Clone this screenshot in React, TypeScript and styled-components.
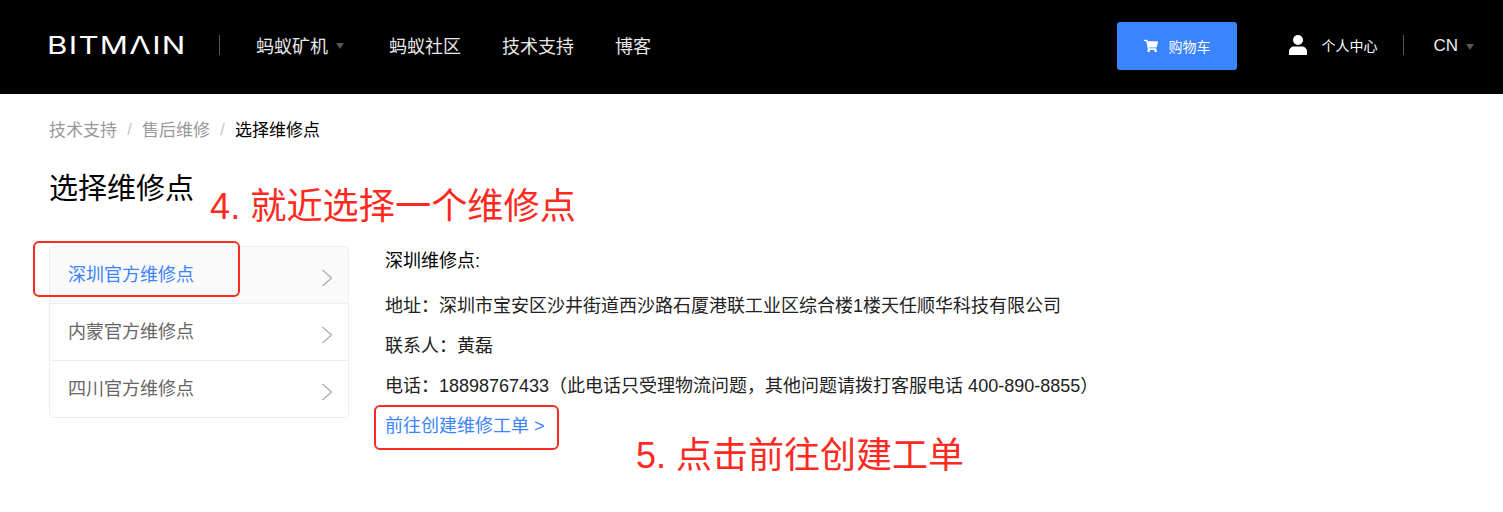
import * as React from "react";
import styled, { createGlobalStyle } from "styled-components";
import { FaShoppingCart } from "react-icons/fa";

const CJK = `"Liberation Sans", "Noto Sans CJK SC", sans-serif`;
const BLUE = "#3a84ff";
const RED = "#ff2a1f";

const GlobalStyle = createGlobalStyle`
	html, body {
		margin: 0;
		padding: 0;
		background: #fff;
		font-family: ${CJK};
	}
`;

const Page = styled.div`
	width: 1503px;
	height: 512px;
	overflow: hidden;
`;

const Header = styled.header`
	height: 94px;
	box-sizing: border-box;
	background: #000;
	display: flex;
	align-items: center;
	padding: 0 25px 2px 49px;
	color: #fff;
`;

const Logo = styled.div`
	font-family: "Inter", sans-serif;
	font-weight: 400;
	font-size: 24px;
	letter-spacing: 1px;
	width: 135px;
	margin-left: -2px;
	padding-bottom: 2px;
	white-space: nowrap;
	transform: scaleX(1.3);
	transform-origin: left center;
`;

const Divider = styled.span<{ $left: number }>`
	width: 1px;
	height: 20px;
	background: #555;
	margin-left: ${(p) => p.$left}px;
	margin-bottom: 2px;
`;

const Nav = styled.nav`
	display: flex;
	align-items: center;
	margin-left: 36px;
	gap: 41px;
	padding-bottom: 2px;
`;

const NavItem = styled.a`
	font-size: 18px;
	color: #e8e8e8;
	display: flex;
	align-items: center;
`;

const Caret = styled.i`
	width: 0;
	height: 0;
	margin: 2px 4px 0 8px;
	border-left: 4.5px solid transparent;
	border-right: 4.5px solid transparent;
	border-top: 6px solid #555;
`;

const HeaderRight = styled.div`
	margin-left: auto;
	display: flex;
	align-items: center;
`;

const CartButton = styled.button`
	width: 120px;
	height: 48px;
	border: 0;
	border-radius: 3px;
	background: ${BLUE};
	color: #fff;
	font-family: ${CJK};
	font-size: 14px;
	display: flex;
	align-items: center;
	justify-content: center;
	gap: 10px;
	padding: 0;
`;

const UserLink = styled.a`
	display: flex;
	align-items: center;
	margin-left: 52px;
	gap: 14px;
	font-size: 14px;
	padding-bottom: 2px;
`;

const Lang = styled.a`
	font-size: 17px;
	margin-left: 29px;
	display: flex;
	align-items: center;
	color: #eee;
`;

const Main = styled.main`
	position: relative;
	padding: 0 49px;
`;

const Breadcrumb = styled.div`
	display: flex;
	align-items: center;
	height: 20px;
	padding-top: 24px;
	font-size: 17px;
	color: #999;
`;

const Crumb = styled.span<{ $active?: boolean }>`
	color: ${(p) => (p.$active ? "#000" : "#999")};
`;

const Slash = styled.span`
	width: 25px;
	padding-top: 4px;
	text-align: center;
	font-size: 16px;
	color: #c4c4c4;
`;

const Title = styled.h1`
	margin: 31px 0 0;
	font-size: 29px;
	line-height: 40px;
	font-weight: 400;
	color: #000;
`;

const Body = styled.div`
	display: flex;
	align-items: flex-start;
	margin-top: 37px;
	gap: 36px;
`;

const List = styled.ul`
	width: 300px;
	box-sizing: border-box;
	margin: 0;
	padding: 0;
	list-style: none;
	border: 1px solid #eee;
	border-radius: 4px;
	overflow: hidden;
`;

const Row = styled.li<{ $active?: boolean }>`
	height: ${(p) => (p.$active ? 56 : 57)}px;
	box-sizing: border-box;
	padding: 0 15px 5px 18px;
	display: flex;
	align-items: center;
	justify-content: space-between;
	font-size: 18px;
	color: ${(p) => (p.$active ? BLUE : "#666")};
	background: ${(p) => (p.$active ? "#fafafa" : "#fff")};
	border-top: ${(p) => (p.$active ? "0" : "1px solid #eee")};
`;

const Chevron = styled.svg`
	width: 12px;
	height: 18px;
	margin-top: 11px;
	fill: none;
	stroke: #aaa;
	stroke-width: 1.2;
`;

const Detail = styled.div`
	font-size: 18px;
	color: #222;
`;

const DetailHead = styled.div`
	line-height: 30px;
	margin-bottom: 10px;
	color: #000;
`;

const Line = styled.div`
	line-height: 40px;
	white-space: nowrap;
`;

const CreateLink = styled.a`
	display: block;
	line-height: 40px;
	color: ${BLUE};
`;

const Annotation = styled.div<{ $left: number; $top: number; $size: number }>`
	position: absolute;
	left: ${(p) => p.$left}px;
	top: ${(p) => p.$top}px;
	font-size: ${(p) => p.$size}px;
	line-height: 44px;
	color: ${RED};
	white-space: nowrap;
`;

const Marker = styled.div<{ $left: number; $top: number; $w: number; $h: number }>`
	position: absolute;
	left: ${(p) => p.$left}px;
	top: ${(p) => p.$top}px;
	width: ${(p) => p.$w}px;
	height: ${(p) => p.$h}px;
	box-sizing: border-box;
	border: 2px solid ${RED};
	border-radius: 6px;
`;

const sites = ["深圳官方维修点", "内蒙官方维修点", "四川官方维修点"];

const App: React.FC = () => (
	<Page>
		<GlobalStyle />
		<Header>
			<Logo aria-label="BITMAIN">BITMΛIN</Logo>
			<Divider $left={37} />
			<Nav>
				<NavItem>
					蚂蚁矿机
					<Caret />
				</NavItem>
				<NavItem>蚂蚁社区</NavItem>
				<NavItem>技术支持</NavItem>
				<NavItem>博客</NavItem>
			</Nav>
			<HeaderRight>
				<CartButton>
					<FaShoppingCart size={14} />
					购物车
				</CartButton>
				<UserLink>
					<svg width="18" height="20" viewBox="0 0 18 20" fill="#fff">
						<circle cx="9" cy="5" r="5" />
						<path d="M0 20v-3.5C0 13.5 2.5 11.5 5 11.5h8c2.500 0 5 2 5 5V20z" />
					</svg>
					个人中心
				</UserLink>
				<Divider $left={26} />
				<Lang>
					CN
					<Caret />
				</Lang>
			</HeaderRight>
		</Header>
		<Main>
			<Breadcrumb>
				<Crumb>技术支持</Crumb>
				<Slash>/</Slash>
				<Crumb>售后维修</Crumb>
				<Slash>/</Slash>
				<Crumb $active>选择维修点</Crumb>
			</Breadcrumb>
			<Title>选择维修点</Title>
			<Body>
				<List>
					{sites.map((name, i) => (
						<Row key={name} $active={i === 0}>
							{name}
							<Chevron viewBox="0 0 12 18">
								<path d="M1.500 1l9 8-9 8" />
							</Chevron>
						</Row>
					))}
				</List>
				<Detail>
					<DetailHead>深圳维修点:</DetailHead>
					<Line>地址：深圳市宝安区沙井街道西沙路石厦港联工业区综合楼1楼天任顺华科技有限公司</Line>
					<Line>联系人：黄磊</Line>
					<Line>电话：18898767433（此电话只受理物流问题，其他问题请拨打客服电话 400-890-8855）</Line>
					<CreateLink>前往创建维修工单 &gt;</CreateLink>
				</Detail>
			</Body>
			<Annotation $left={210} $top={91} $size={36.2}>
				4. 就近选择一个维修点
			</Annotation>
			<Annotation $left={636} $top={340} $size={36}>
				5. 点击前往创建工单
			</Annotation>
			<Marker $left={33} $top={147} $w={207} $h={56} />
			<Marker $left={374} $top={311} $w={185} $h={45} />
		</Main>
	</Page>
);

export default App;
